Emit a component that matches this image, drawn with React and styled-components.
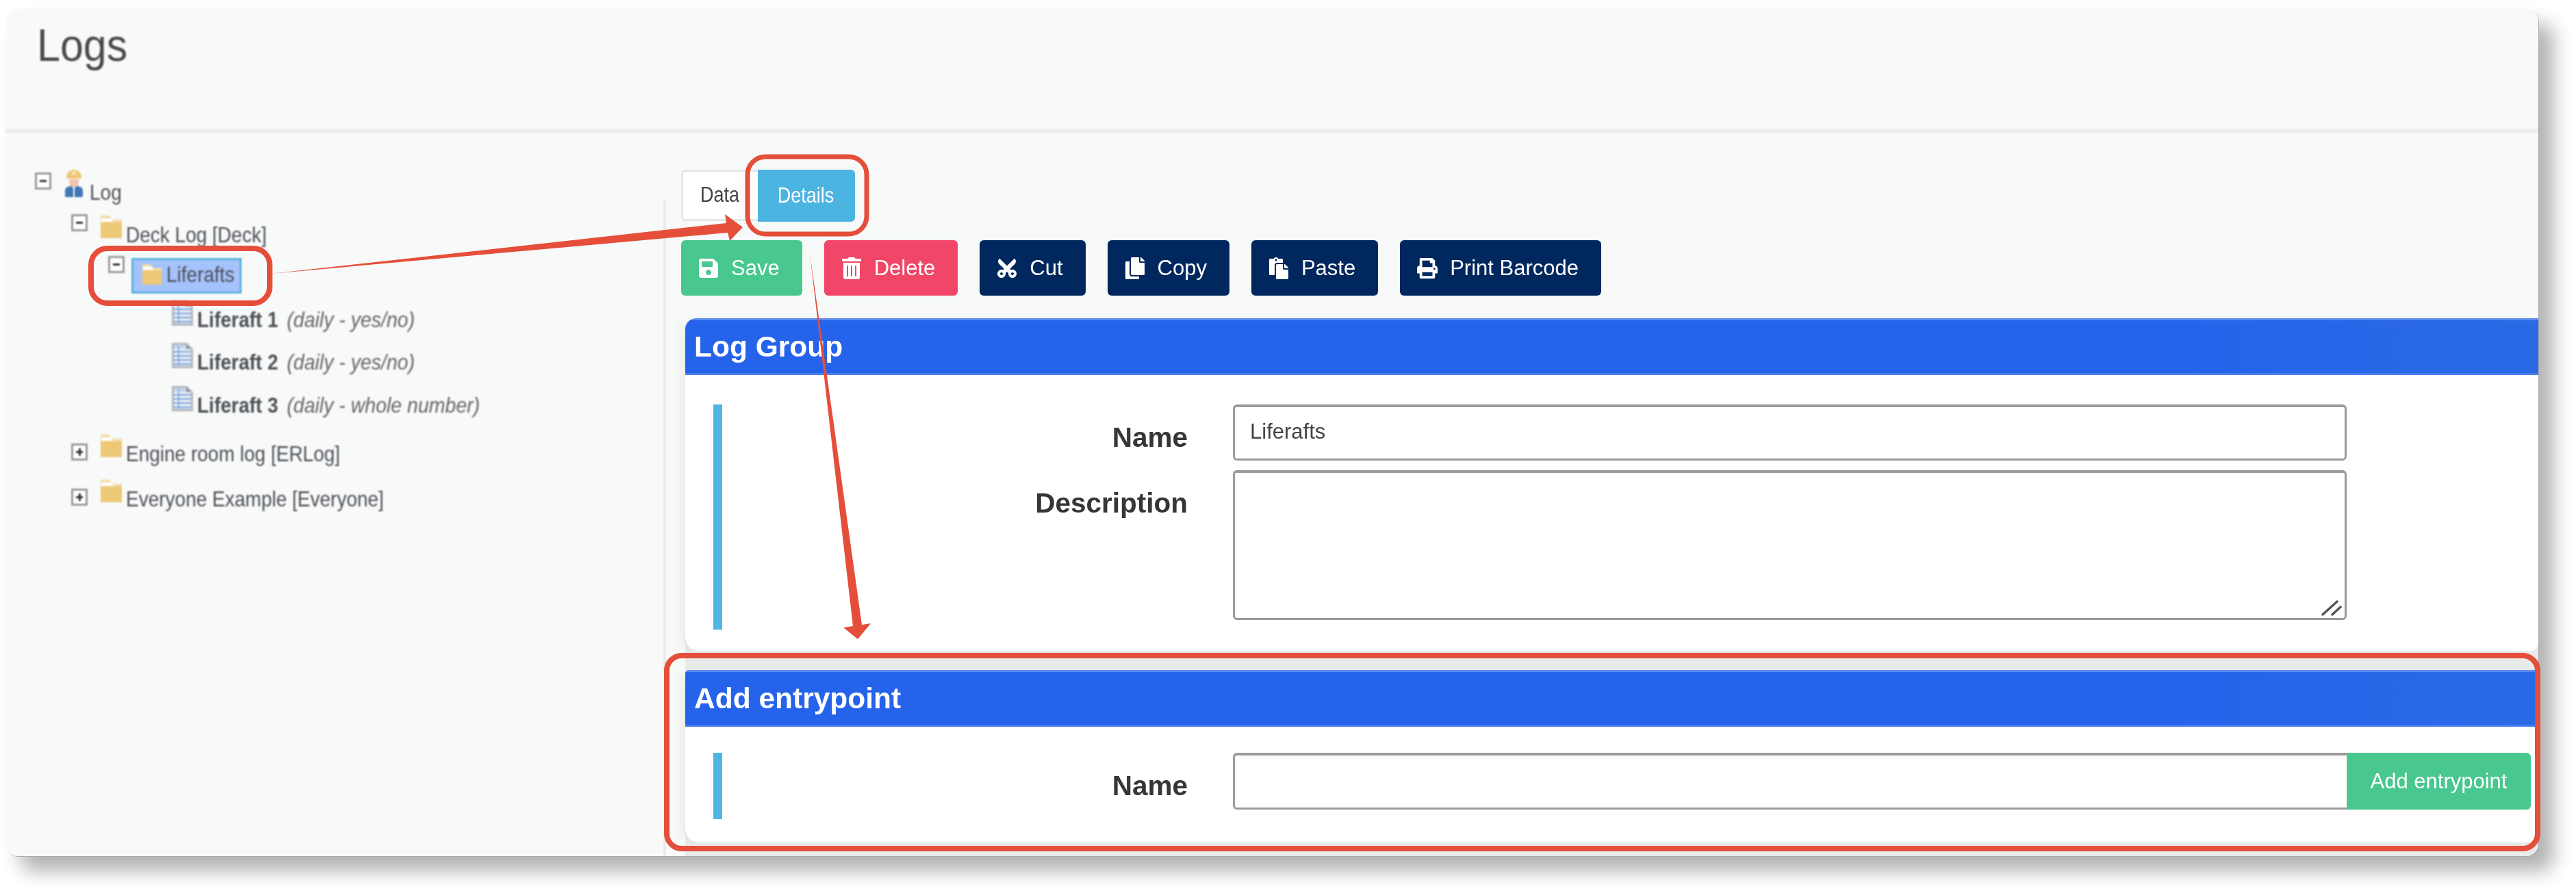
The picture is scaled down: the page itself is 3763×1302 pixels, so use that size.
import * as React from 'react';
import styled, { createGlobalStyle } from 'styled-components';
import { FaSave, FaTrashAlt, FaCut, FaCopy, FaPaste, FaPrint } from 'react-icons/fa';

const Global = createGlobalStyle`
  html, body { margin: 0; background: #fff; }
  * { box-sizing: border-box; }
  body { font-family: "Liberation Sans", Arial, sans-serif; color: #4a4a4a; }
`;

const Page = styled.div`
  position: relative;
  width: 3763px;
  height: 1302px;
  padding: 13px 0 0 8px;
  overflow: hidden;
`;

const Frame = styled.div`
  width: 3700px;
  height: 1238px;
  display: flex;
  flex-direction: column;
  overflow: hidden;
  background: #f8faf9;
  border-radius: 18px;
  box-shadow: 1px 1px 0 #aaa, 22px 22px 28px rgba(0, 0, 0, 0.3);
`;

const TitleBar = styled.div`
  height: 181px;
  flex: none;
  padding: 20px 0 0 46px;
  border-bottom: 6px solid #eceef1;
`;

const Title = styled.h1`
  display: inline-block;
  margin: 0;
  font-size: 61px;
  line-height: 70px;
  font-weight: 400;
  color: #4a4a4a;
  filter: blur(0.8px);
  transform: scaleY(1.1);
  transform-origin: 0 79%;
`;

const Main = styled.div`
  flex: 1;
  display: flex;
  min-height: 0;
`;

const Tree = styled.div`
  width: 961px;
  flex: none;
  padding-top: 54px;
  filter: blur(0.9px);
`;

const Row = styled.div`
  display: flex;
  align-items: flex-end;
  margin-top: ${p => p.$gap || 0}px;
  padding-left: ${p => p.$indent}px;
`;

const Toggle = styled.span`
  position: relative;
  flex: none;
  width: 24px;
  height: 25px;
  margin-bottom: ${p => p.$drop || 9}px;
  margin-right: ${p => p.$space || 18}px;
  background: #fff;
  border: 3px solid #9a9a9a;
  &::before {
    content: '';
    position: absolute;
    left: 4px;
    right: 4px;
    top: 8px;
    height: 3px;
    background: #333;
  }
  &::after {
    content: '';
    display: ${p => (p.$open ? 'none' : 'block')};
    position: absolute;
    left: 8px;
    top: 4px;
    width: 3px;
    height: 11px;
    background: #333;
  }
`;

const IconSlot = styled.span`
  display: flex;
  flex: none;
  margin-bottom: ${p => p.$drop}px;
  margin-right: ${p => p.$space}px;
`;

const TreeText = styled.span`
  display: inline-block;
  font-size: 28px;
  line-height: 34px;
  white-space: pre;
  color: #4d4f57;
  transform: scaleY(1.12);
  transform-origin: 50% 76%;
  b { font-weight: 700; }
  i { margin-left: 5px; color: #666; font-size: 28.5px; }
`;

const Selection = styled.div`
  display: flex;
  align-items: flex-end;
  width: 161px;
  height: 52px;
  padding: 0 0 6px 12px;
  background: #a4c2fb;
  border: 3px solid #5cb3dc;
`;

const SelectedFolder = styled.span`
  display: flex;
  flex: none;
  margin: 0 6px 3px 0;
`;

const Pane = styled.div`
  position: relative;
  flex: 1;
  min-width: 0;
  display: flex;
  flex-direction: column;
  padding: 54px 0 0 26px;
  &::before {
    content: '';
    position: absolute;
    left: 0;
    top: 98px;
    bottom: 0;
    width: 4px;
    background: #e9ebed;
  }
`;

const Tabs = styled.div`
  display: flex;
  filter: blur(0.7px);
`;

const Tab = styled.div`
  width: ${p => p.$width}px;
  height: 75px;
  display: flex;
  align-items: center;
  justify-content: center;
  font-size: 27px;
  border-radius: 6px 0 0 6px;
  border: 3px solid #e6e7e8;
  border-right: 0;
  background: #fff;
  color: #444;
  span { transform: scaleY(1.15); padding-right: 2px; }
`;

const ActiveTab = styled(Tab)`
  height: 76px;
  border: 0;
  border-radius: 0 6px 6px 0;
  background: #4cb4e0;
  color: #fff;
`;

const Toolbar = styled.div`
  display: flex;
  gap: 32px;
  margin-top: 27px;
  filter: blur(0.7px);
`;

const ToolButton = styled.button`
  height: 81px;
  display: flex;
  align-items: center;
  gap: 18px;
  padding: 0 33px 0 25px;
  border: 0;
  border-radius: 6px;
  font-family: inherit;
  font-size: 31px;
  color: #fff;
  background: ${p => p.$bg};
  svg { width: 30px; height: 32px; flex: none; transform: rotate(${p => p.$turn || 0}deg); }
`;

const Cards = styled.div`
  flex: 1;
  margin: 33px 0 0 6px;
  padding-bottom: 20px;
  background: #e9ebeb;
  border-top-left-radius: 16px;
  filter: blur(0.6px);
`;

const Card = styled.section`
  margin-top: ${p => p.$gap || 0}px;
  background: #fff;
  border-radius: ${p => p.$round}px 0 12px 20px;
  overflow: hidden;
  box-shadow: -12px 0 14px -4px rgba(0, 0, 0, 0.05);
`;

const CardHead = styled.h2`
  margin: 0;
  height: 83px;
  padding-left: 13px;
  display: flex;
  align-items: center;
  font-size: 42.5px;
  font-weight: 700;
  color: #fff;
  background: linear-gradient(90deg, #2563eb 80%, #2b6ae6 100%);
  border-top: 3px solid #5d8cf1;
  border-bottom: 3px solid #4a7ef0;
`;

const CardBody = styled.div`
  display: flex;
  padding: ${p => p.$top}px 0 ${p => p.$bottom}px 41px;
`;

const Accent = styled.div`
  width: 13px;
  flex: none;
  background: #4db6e2;
`;

const Fields = styled.div`
  display: grid;
  grid-template-columns: 680px 1627px;
  column-gap: 66px;
  row-gap: 14px;
  padding-bottom: 14px;
`;

const FieldLabel = styled.label`
  padding-top: 24px;
  text-align: right;
  font-size: 40.5px;
  line-height: 48px;
  font-weight: 700;
  color: #363636;
`;

const TextInput = styled.input`
  height: 82px;
  width: 100%;
  padding: 0 22px 4px;
  border: 3px solid #9b9b9b;
  border-top-width: 4px;
  border-radius: 6px;
  outline: 0;
  background: #fff;
  font-family: inherit;
  font-size: 31px;
  color: #444;
`;

const AreaWrap = styled.div`
  position: relative;
  height: 219px;
`;

const TextArea = styled.textarea`
  display: block;
  width: 100%;
  height: 100%;
  resize: none;
  border: 3px solid #9b9b9b;
  border-top-width: 4px;
  border-radius: 6px;
  outline: 0;
  background: #fff;
`;

const Grip = styled.svg`
  position: absolute;
  right: 6px;
  bottom: 6px;
`;

const InputGroup = styled.div`
  display: flex;
  height: 83px;
  width: 1896px;
`;

const AddInput = styled(TextInput)`
  height: 83px;
  width: 1627px;
  flex: none;
  border-radius: 6px 0 0 6px;
  border-right: 0;
`;

const AddButton = styled.button`
  width: 269px;
  flex: none;
  border: 0;
  border-radius: 0 6px 6px 0;
  background: #48c78e;
  color: #fff;
  font-family: inherit;
  font-size: 31px;
`;

const Annotations = styled.svg`
  position: absolute;
  left: 0;
  top: 0;
  pointer-events: none;
`;

const Folder = ({ w = 33, h = 35 }) => (
  <svg width={w} height={h} viewBox="0 0 33 35">
    <path d="M1 1h12l6 6h13v27H1z" fill="#f3dba6" />
    <path d="M2 5h14l4 5H2z" fill="#fff" />
    <path d="M1 11h31v22a1 1 0 0 1-1 1H2a1 1 0 0 1-1-1z" fill="#edc877" />
  </svg>
);

const Sheet = () => (
  <svg width="31" height="37" viewBox="0 0 31 37">
    <path d="M1.5 1.5h20l8 8v26h-28z" fill="#c4d6ee" stroke="#b6b8bc" strokeWidth="3" />
    <path d="M21 2v8h8z" fill="#8f9298" />
    <path d="M3 10h25M3 16h25M3 22h25M3 28h25" stroke="#f1f5fb" strokeWidth="2" fill="none" />
    <path d="M3 13h25M3 19h25M3 25h25M3 31h25M10 4v29" stroke="#7ea3d6" strokeWidth="1.5" fill="none" />
  </svg>
);

const Worker = () => (
  <svg width="28" height="41" viewBox="0 0 28 41">
    <path d="M3 11a11 11 0 0 1 22 0v2H3z" fill="#edc877" />
    <path d="M11 2h6v6h-6z" fill="#f5dfae" />
    <path d="M7 14h14v5a7 7 0 0 1-14 0z" fill="#f0c3b0" />
    <path d="M1 39v-8c0-5 4-7 9-7l3 3v13H3a2 2 0 0 1-2-1z" fill="#3f78b5" />
    <path d="M27 39v-8c0-5-4-7-9-7l-3 3v13h10a2 2 0 0 0 2-1z" fill="#3f78b5" />
  </svg>
);

const Leaf = ({ gap, name, kind }) => (
  <Row $indent={243} $gap={gap}>
    <IconSlot $drop={10} $space={6}><Sheet /></IconSlot>
    <TreeText><b>{name}</b> <i>({kind})</i></TreeText>
  </Row>
);

const Branch = ({ gap, name }) => (
  <Row $indent={96} $gap={gap}>
    <Toggle />
    <IconSlot $drop={13} $space={5}><Folder /></IconSlot>
    <TreeText>{name}</TreeText>
  </Row>
);

const BUTTONS = [
  { label: 'Save', bg: '#48c78e', Icon: FaSave },
  { label: 'Delete', bg: '#f14668', Icon: FaTrashAlt },
  { label: 'Cut', bg: '#00285e', Icon: FaCut, turn: -90 },
  { label: 'Copy', bg: '#00285e', Icon: FaCopy },
  { label: 'Paste', bg: '#00285e', Icon: FaPaste },
  { label: 'Print Barcode', bg: '#00285e', Icon: FaPrint },
];

const RED = '#e54e3a';

export default function App() {
  return (
    <Page>
      <Global />
      <Frame>
        <TitleBar>
          <Title>Logs</Title>
        </TitleBar>
        <Main>
          <Tree>
            <Row $indent={43}>
              <Toggle $open $drop={23} $space={19} />
              <IconSlot $drop={11} $space={9}><Worker /></IconSlot>
              <TreeText>Log</TreeText>
            </Row>
            <Row $indent={96} $gap={13}>
              <Toggle $open $drop={24} />
              <IconSlot $drop={13} $space={5}><Folder /></IconSlot>
              <TreeText>Deck Log [Deck]</TreeText>
            </Row>
            <Row $indent={150} $gap={12}>
              <Toggle $open $drop={30} $space={10} />
              <Selection>
                <SelectedFolder><Folder w={30} h={32} /></SelectedFolder>
                <TreeText>Liferafts</TreeText>
              </Selection>
            </Row>
            <Leaf gap={10} name="Liferaft 1" kind="daily - yes/no" />
            <Leaf gap={15} name="Liferaft 2" kind="daily - yes/no" />
            <Leaf gap={16} name="Liferaft 3" kind="daily - whole number" />
            <Branch gap={23} name="Engine room log [ERLog]" />
            <Branch gap={18} name="Everyone Example [Everyone]" />
          </Tree>
          <Pane>
            <Tabs>
              <Tab $width={112}><span>Data</span></Tab>
              <ActiveTab $width={142}><span>Details</span></ActiveTab>
            </Tabs>
            <Toolbar>
              {BUTTONS.map(({ label, bg, Icon, turn }) => (
                <ToolButton key={label} $bg={bg} $turn={turn}>
                  <Icon />
                  {label}
                </ToolButton>
              ))}
            </Toolbar>
            <Cards>
              <Card $round={16}>
                <CardHead>Log Group</CardHead>
                <CardBody $top={43} $bottom={31}>
                  <Accent />
                  <Fields>
                    <FieldLabel>Name</FieldLabel>
                    <TextInput defaultValue="Liferafts" />
                    <FieldLabel>Description</FieldLabel>
                    <AreaWrap>
                      <TextArea />
                      <Grip width="32" height="24" viewBox="0 0 32 24">
                        <path d="M3 22 24 3M17 22 29 11" stroke="#555" strokeWidth="3.5" strokeLinecap="round" fill="none" />
                      </Grip>
                    </AreaWrap>
                  </Fields>
                </CardBody>
              </Card>
              <Card $round={5} $gap={28}>
                <CardHead>Add entrypoint</CardHead>
                <CardBody $top={38} $bottom={34}>
                  <Accent />
                  <Fields>
                    <FieldLabel>Name</FieldLabel>
                    <InputGroup>
                      <AddInput />
                      <AddButton>Add entrypoint</AddButton>
                    </InputGroup>
                  </Fields>
                </CardBody>
              </Card>
            </Cards>
          </Pane>
        </Main>
      </Frame>
      <Annotations width="3763" height="1302" viewBox="0 0 3763 1302">
        <rect x="133" y="363" width="261" height="80" rx="24" fill="none" stroke={RED} strokeWidth="8" />
        <rect x="1092" y="229" width="174" height="113" rx="26" fill="none" stroke={RED} strokeWidth="7" />
        <rect x="974" y="958" width="2733" height="282" rx="22" fill="none" stroke={RED} strokeWidth="8" />
        <path d="M395 400 1061 326 1059 313 1085 332 1066 352 1063 340Z" fill={RED} />
        <path d="M1183 370 1246 915 1232 917 1253 934 1272 911 1259 913Z" fill={RED} />
      </Annotations>
    </Page>
  );
}
